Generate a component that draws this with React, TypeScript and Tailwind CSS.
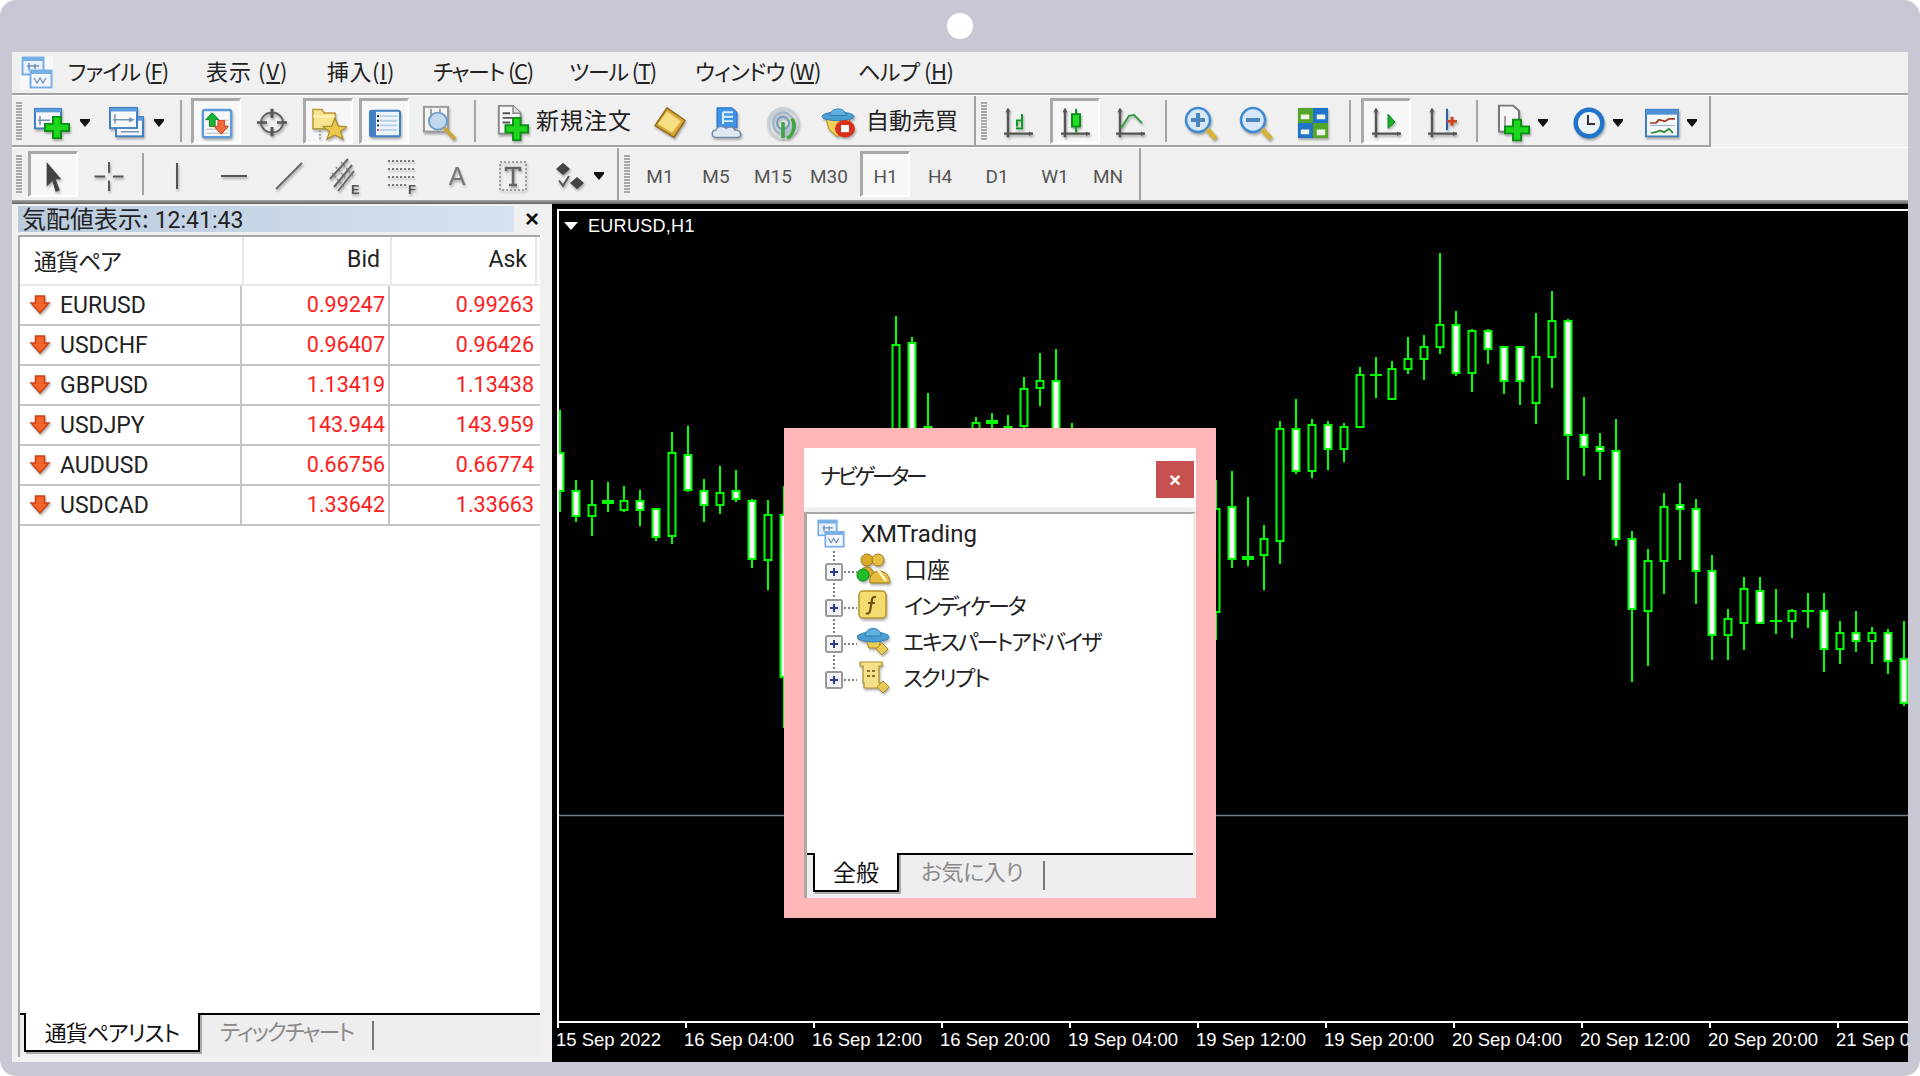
import React from "react";

const GRIP = "w-[6px] h-[38px] bg-[repeating-linear-gradient(to_bottom,#a8a8a8_0px,#a8a8a8_2px,transparent_2px,transparent_3px)]";
const SEP = "w-[2px] h-[42px] bg-[#a4a4a4]";
const JP = "[font-feature-settings:'palt']";
const SHADOW = "drop-shadow-[1px_2px_1px_rgba(0,0,0,0.3)]";

function Btn({ ml, active, flat, children }: { ml: string; active?: boolean; flat?: boolean; children?: React.ReactNode }) {
  return (
    <div className={`${ml} shrink-0 flex items-center justify-center w-[50px] h-[46px] ${active ? "bg-[#f7f7f7] border-t-[3px] border-l-[3px] border-r-2 border-b-2 border-t-[#a9a9a9] border-l-[#a9a9a9] border-r-white border-b-white" : ""}`}>
      <div className={`flex translate-y-[2px] ${flat ? "" : SHADOW}`}>{children}</div>
    </div>
  );
}

function Arrow({ ml }: { ml: string }) {
  return (
    <svg className={`${ml} mt-[4px] shrink-0`} width="10" height="8" viewBox="0 0 10 8">
      <path d="M0 0H10V2L5 8L0 2Z" fill="#111" />
    </svg>
  );
}

const GreenPlus = ({ x, y, s = 1 }: { x: number; y: number; s?: number }) => (
  <g transform={`translate(${x} ${y}) scale(${s})`}>
    <path d="M8 0H16V8H24V16H16V24H8V16H0V8H8Z" fill="#1fd61f" stroke="#0a8f14" strokeWidth="2" />
  </g>
);

const Win = ({ x, y, w, h, fill = "#f2f5fb" }: { x: number; y: number; w: number; h: number; fill?: string }) => (
  <g>
    <rect x={x} y={y} width={w} height={h} fill={fill} stroke="#3f7fc4" strokeWidth="2" />
    <rect x={x} y={y} width={w} height="4" fill="#5b9bdc" />
  </g>
);

const Logo = ({ size = 32 }: { size?: number }) => (
  <svg width={size} height={size + 2} viewBox="0 0 32 34">
    <rect x="1.5" y="1.5" width="21" height="17" fill="#e8f1fb" stroke="#78aee6" strokeWidth="2" />
    <rect x="1" y="1" width="22" height="4" fill="#78aee6" />
    <path d="M6 10H18M8 7V14M14 8V13" stroke="#6d8fb5" strokeWidth="1.5" fill="none" />
    <rect x="9.5" y="14.5" width="21" height="17" fill="#f4f8fd" stroke="#78aee6" strokeWidth="2" />
    <rect x="9" y="14" width="22" height="4" fill="#78aee6" />
    <path d="M13 22L16 27L19 22L22 27L25 22" stroke="#6d8fb5" strokeWidth="1.3" fill="none" />
  </svg>
);

const IconNewChart = () => (
  <svg width="36" height="32" viewBox="0 0 36 36" preserveAspectRatio="none">
    <Win x={1} y={2} w={26} h={22} />
    <path d="M6 10V20M4 15H16" stroke="#7894b5" strokeWidth="1.6" />
    <GreenPlus x={11} y={11} />
  </svg>
);
const IconProfile = () => (
  <svg width="36" height="33" viewBox="0 0 36 36" preserveAspectRatio="none">
    <Win x={7} y={12} w={27} h={21} />
    <Win x={1} y={2} w={27} h={22} fill="#f7f9fd" />
    <path d="M6 9V19M4 15H24M20 13L24 15L20 17M12 28H30" stroke="#7894b5" strokeWidth="1.6" fill="none" />
  </svg>
);
const IconMarket = () => (
  <svg width="32" height="33" viewBox="0 0 34 34" preserveAspectRatio="none">
    <rect x="2" y="3" width="30" height="28" rx="2" fill="#f6f6f6" stroke="#5b9bdc" strokeWidth="2.5" />
    <path d="M20 14H29M20 19H29M6 23H29M6 27H29" stroke="#ccc" strokeWidth="1.5" />
    <path d="M12 6L19 13H15V20H9V13H5Z" fill="#19b534" stroke="#0c8223" strokeWidth="1" />
    <path d="M18 14H25V20H29L21.5 28L14 20H18Z" fill="#f06a3c" stroke="#c9431c" strokeWidth="1" />
  </svg>
);
const IconCross = () => (
  <svg width="32" height="31" viewBox="0 0 32 34" preserveAspectRatio="none">
    <circle cx="16" cy="17" r="11" fill="none" stroke="#666" strokeWidth="2" />
    <path d="M16 2V12M16 22V32M1 17H11M21 17H31" stroke="#555" strokeWidth="3" />
  </svg>
);
const IconFolderStar = () => (
  <svg width="36" height="35" viewBox="0 0 36 40" preserveAspectRatio="none">
    <path d="M2 8V4H11L13 8H24V26H2Z" fill="#f8e58f" stroke="#b89a3c" strokeWidth="1.5" />
    <path d="M2 12H24" stroke="#fff4c0" strokeWidth="2" />
    <path d="M9 28V38" stroke="#888" strokeDasharray="2 2" strokeWidth="1.5" />
    <path d="M24 14L27.5 23L36 23.5L29.5 29L32 38L24 33L16 38L18.5 29L12 23.5L20.5 23Z" fill="#e8c84a" stroke="#a68a28" strokeWidth="1.2" />
  </svg>
);
const IconNavList = () => (
  <svg width="32" height="31" viewBox="0 0 32 34" preserveAspectRatio="none">
    <rect x="1" y="3" width="30" height="28" rx="2" fill="#eef4fb" stroke="#3f7fc4" strokeWidth="2" />
    <rect x="1" y="3" width="6" height="28" fill="#3f7fc4" />
    <path d="M11 9H28M11 14H28M11 19H28M11 24H28" stroke="#b9cfe6" strokeWidth="2" />
    <path d="M9 8V10M9 13V15M9 18V20" stroke="#222" strokeWidth="2" />
    <path d="M9 23V25" stroke="#d33" strokeWidth="2" />
  </svg>
);
const IconTester = () => (
  <svg width="36" height="36" viewBox="0 0 36 38" preserveAspectRatio="none">
    <rect x="2" y="2" width="24" height="26" fill="#f3f3f3" stroke="#999" strokeWidth="2" />
    <path d="M9 4V20M18 4V20" stroke="#888" strokeWidth="1.5" />
    <circle cx="16" cy="17" r="9" fill="#c2d8ee" stroke="#6f9cc9" strokeWidth="2" />
    <path d="M22 24L33 36" stroke="#c9a63a" strokeWidth="4" />
  </svg>
);
const IconNewOrder = () => (
  <svg width="34" height="37" viewBox="0 0 36 40" preserveAspectRatio="none" className="ml-[2px]">
    <path d="M3 2H18L26 10V32H3Z" fill="#f7f7f7" stroke="#888" strokeWidth="2" />
    <path d="M7 10H15M7 15H21M7 20H15" stroke="#555" strokeWidth="2" />
    <path d="M18 2V10H26" fill="#e0e0e0" stroke="#888" strokeWidth="1.5" />
    <GreenPlus x={10} y={15} />
  </svg>
);
const IconBook = () => (
  <svg width="34" height="32" viewBox="0 0 34 36" preserveAspectRatio="none">
    <path d="M14 1L32 15L21 34L2 21Z" fill="#d9a832" stroke="#8f6a1a" strokeWidth="1.5" />
    <path d="M14 5L28 16L19 29L5 19Z" fill="#f6de82" />
  </svg>
);
const IconCloud = () => (
  <svg width="34" height="34" viewBox="0 0 34 38" preserveAspectRatio="none">
    <path d="M7 2H22L27 7V24H7Z" fill="#3d94e8" stroke="#1d6bc0" strokeWidth="1" />
    <path d="M13 7H23M13 12H23M13 17H23M13 7V20" stroke="#dcecfb" strokeWidth="2" fill="none" />
    <path d="M6 35C1 35 1 27 6 27C7 22 14 22 16 25C20 22 25 24 25 27C31 26 33 35 27 35Z" fill="#dfe7f0" stroke="#6f8aa8" strokeWidth="1.5" />
  </svg>
);
const IconSignal = () => (
  <svg width="34" height="34" viewBox="0 0 34 38" preserveAspectRatio="none">
    <ellipse cx="17" cy="19" rx="15" ry="17" fill="none" stroke="#c7d2dc" strokeWidth="2" />
    <ellipse cx="17" cy="19" rx="10" ry="12" fill="none" stroke="#9db7cf" strokeWidth="2" />
    <ellipse cx="17" cy="19" rx="6" ry="7" fill="none" stroke="#6d9dc4" strokeWidth="2" />
    <path d="M17 18V36M26 14C30 22 28 32 21 36" stroke="#3fa53f" strokeWidth="3.5" fill="none" />
  </svg>
);
const Hat = () => (
  <>
    <ellipse cx="16" cy="12" rx="16" ry="5" fill="#4c9dd1" stroke="#2f7eb3" strokeWidth="1" />
    <path d="M8 11C8 1 24 1 24 11Z" fill="#5fb0e0" stroke="#2f7eb3" strokeWidth="1" />
  </>
);
const IconAuto = () => (
  <svg width="36" height="35" viewBox="0 0 36 40" preserveAspectRatio="none">
    <path d="M6 15L30 15L26 30L17 36L9 28Z" fill="#f2cf57" stroke="#a98b22" strokeWidth="1" />
    <g transform="translate(2 1)"><Hat /></g>
    <circle cx="25" cy="27" r="10" fill="#d9301e" />
    <rect x="21" y="23" width="8" height="8" fill="#fff" />
  </svg>
);
const Axes = ({ children }: { children?: React.ReactNode }) => (
  <svg width="32" height="32" viewBox="0 0 32 36" preserveAspectRatio="none">
    <path d="M5 2V34M1 30H30" stroke="#555" strokeWidth="2.4" fill="none" />
    <path d="M5 1L2.5 6H7.5ZM30 30L26 27.5V32.5Z" fill="#555" />
    {children}
  </svg>
);
const IconZoom = ({ plus }: { plus?: boolean }) => (
  <svg width="34" height="34" viewBox="0 0 34 34">
    <circle cx="14" cy="14" r="12" fill="#d6e8f7" stroke="#3f8ad2" strokeWidth="2.5" />
    <path d="M7 14H21" stroke="#4d86bb" strokeWidth="4" />
    {plus && <path d="M14 7V21" stroke="#4d86bb" strokeWidth="4" />}
    <path d="M23 23L32 33" stroke="#d4b23c" strokeWidth="5" />
  </svg>
);
const IconTile = () => (
  <svg width="32" height="32" viewBox="0 0 34 34" preserveAspectRatio="none">
    <rect x="1" y="1" width="16" height="16" fill="#53a62b" />
    <rect x="17" y="1" width="16" height="16" fill="#1f74c9" />
    <rect x="1" y="17" width="16" height="16" fill="#1f74c9" />
    <rect x="17" y="17" width="16" height="16" fill="#53a62b" />
    <path d="M4 8H13V13H4ZM21 8H30V13H21ZM4 24H13V29H4ZM21 24H30V30H21Z" fill="#eef4e8" />
  </svg>
);
const IconDocPlus = () => (
  <svg width="36" height="38" viewBox="0 0 36 44" preserveAspectRatio="none">
    <path d="M2 2H16L22 8V32H2Z" fill="#f5f5f5" stroke="#777" strokeWidth="2" />
    <path d="M8 14V26" stroke="#888" strokeWidth="1.5" />
    <GreenPlus x={8} y={18} />
  </svg>
);
const IconClock = () => (
  <svg width="34" height="34" viewBox="0 0 34 34">
    <circle cx="17" cy="17" r="15.500" fill="#1f74c9" />
    <circle cx="17" cy="17" r="11" fill="#eef3f8" />
    <path d="M16 9V18H23" stroke="#333" strokeWidth="2" fill="none" />
  </svg>
);
const IconIndWin = () => (
  <svg width="34" height="30" viewBox="0 0 34 36" preserveAspectRatio="none">
    <rect x="1" y="2" width="32" height="32" fill="#f6f8fb" stroke="#3f7fc4" strokeWidth="2" />
    <rect x="1" y="2" width="32" height="6" fill="#4f90d4" />
    <path d="M5 21H30" stroke="#9fb8d2" strokeWidth="1.5" />
    <path d="M5 18L11 18L14 14L20 16L24 13L30 13" stroke="#a33a1e" strokeWidth="2" fill="none" />
    <path d="M6 30L11 29L15 27L19 29L24 25L28 30" stroke="#2c8f32" strokeWidth="2" fill="none" />
  </svg>
);
const IconPointer = () => (
  <svg width="18" height="31" viewBox="0 0 22 34" preserveAspectRatio="none">
    <path d="M2 1L20 20H13L18 32L13 34L9 22L2 28Z" fill="#444" />
  </svg>
);
const IconCrossThin = () => (
  <svg width="32" height="31" viewBox="0 0 32 32">
    <path d="M16 1V12M16 20V31M1 16H12M20 16H31" stroke="#555" strokeWidth="2" />
  </svg>
);
const IconEChan = () => (
  <svg width="34" height="44" viewBox="0 0 34 44" className="-mb-[6px]">
    <path d="M2 22L20 2M6 30L24 8M10 34L26 14" stroke="#666" strokeWidth="2" />
    <path d="M4 16L16 30M8 10L20 24M13 5L25 19" stroke="#888" strokeWidth="1.5" strokeDasharray="2 2" />
    <text x="23" y="37" fontSize="13" fontFamily="Liberation Sans" fontWeight="700" fill="#555">E</text>
  </svg>
);
const IconFGrid = () => (
  <svg width="34" height="44" viewBox="0 0 34 44" className="-mb-[6px]">
    <path d="M3 4H31M3 12H31M3 20H31M3 28H22" stroke="#777" strokeWidth="2" strokeDasharray="2 2" />
    <text x="23" y="37" fontSize="13" fontFamily="Liberation Sans" fontWeight="700" fill="#555">F</text>
  </svg>
);
const IconTextBox = () => (
  <svg width="30" height="34" viewBox="0 0 30 34">
    <rect x="2" y="3" width="26" height="28" fill="none" stroke="#888" strokeWidth="1.5" strokeDasharray="2 2" />
    <path d="M8 12V9H22V12M15 9V26M11 26H19" stroke="#666" strokeWidth="2.5" fill="none" />
  </svg>
);
const IconShapes = () => (
  <svg width="32" height="30" viewBox="0 0 32 34" preserveAspectRatio="none">
    <path d="M9 2L16 9L9 16L2 9Z" fill="#444" />
    <path d="M23 18L30 25L23 32L16 25Z" fill="#444" />
    <path d="M5 22L9 28L15 17" stroke="#555" strokeWidth="2" fill="none" />
  </svg>
);
const DownArrow = () => (
  <svg width="22" height="24" viewBox="0 0 22 24" className={`shrink-0 ${SHADOW}`}>
    <path d="M6.500 3H15.500V10H20L11 20L2 10H6.500Z" fill="#f2642b" stroke="#c9401a" strokeWidth="1.5" />
  </svg>
);
const TreeAcc = () => (
  <svg width="36" height="34" viewBox="0 0 36 34">
    <circle cx="11" cy="8" r="6" fill="#d9ab2c" stroke="#9c7a18" />
    <circle cx="22" cy="8" r="6" fill="#e6bd3f" stroke="#9c7a18" />
    <path d="M4 24C4 12 18 12 18 24Z" fill="#d9ab2c" stroke="#9c7a18" />
    <path d="M14 31C12 15 34 15 34 31Z" fill="#e6bd3f" stroke="#9c7a18" />
    <path d="M22 18L30 29" stroke="#fff6c9" strokeWidth="2.5" />
    <circle cx="7" cy="23" r="6" fill="#1fbd2a" stroke="#118a1b" />
  </svg>
);
const TreeF = () => (
  <svg width="34" height="32" viewBox="0 0 34 32">
    <rect x="2" y="2" width="27" height="27" rx="4" fill="#f5dc71" stroke="#b3952e" strokeWidth="1.5" />
    <path d="M19 8C15 7 15 10 14.500 14L13 22C12.500 25 10 25 9 24M11 14H18" stroke="#6e5412" strokeWidth="2.2" fill="none" />
  </svg>
);
const TreeHat = () => (
  <svg width="34" height="32" viewBox="0 0 34 32">
    <path d="M8 12H24L22 23H12Z" fill="#eccc55" stroke="#a88a25" />
    <Hat />
    <path d="M25 18L31 24L25 30L19 24Z" fill="#ecc955" stroke="#a88a25" />
  </svg>
);
const TreeScroll = () => (
  <svg width="34" height="32" viewBox="0 0 34 32">
    <path d="M3 1H25V5H22V22H26V27H7V22H6V5H3Z" fill="#f4e08a" stroke="#ab8e2c" strokeWidth="1.2" />
    <path d="M10 10H18M10 15H18" stroke="#8a7326" strokeWidth="2" strokeDasharray="3 2" />
    <path d="M26 20L32 26L26 32L20 26Z" fill="#ecc955" stroke="#a88a25" />
  </svg>
);

const rows = [
  ["EURUSD", "0.99247", "0.99263"],
  ["USDCHF", "0.96407", "0.96426"],
  ["GBPUSD", "1.13419", "1.13438"],
  ["USDJPY", "143.944", "143.959"],
  ["AUDUSD", "0.66756", "0.66774"],
  ["USDCAD", "1.33642", "1.33663"],
];

const dates = ["15 Sep 2022", "16 Sep 04:00", "16 Sep 12:00", "16 Sep 20:00", "19 Sep 04:00", "19 Sep 12:00", "19 Sep 20:00", "20 Sep 04:00", "20 Sep 12:00", "20 Sep 20:00", "21 Sep 04:00"];

// x index (from 559, 16px step), high, body top, body bottom, low, white body
type C = [number, number, number, number, number, number];
const candles: C[] = [
  [0, 410, 453, 491, 512, 1], [1, 480, 491, 516, 522, 1], [2, 480, 505, 516, 536, 0], [3, 482, 502, 502, 512, 1],
  [4, 486, 501, 510, 512, 0], [5, 490, 501, 510, 526, 1], [6, 509, 509, 537, 541, 1], [7, 432, 453, 536, 544, 0],
  [8, 426, 455, 490, 492, 1], [9, 479, 491, 505, 522, 1], [10, 466, 493, 505, 514, 0], [11, 470, 491, 499, 502, 1],
  [12, 499, 501, 559, 568, 1], [13, 500, 515, 560, 590, 0], [14, 486, 515, 677, 728, 1],
  [21, 316, 345, 500, 520, 0], [22, 337, 343, 500, 520, 1], [23, 393, 427, 500, 520, 0],
  [26, 417, 423, 500, 520, 0], [27, 413, 422, 422, 500, 1], [28, 415, 427, 500, 520, 0],
  [29, 377, 389, 426, 428, 0], [30, 353, 381, 388, 406, 0], [31, 349, 381, 500, 520, 1], [32, 423, 450, 500, 520, 0],
  [41, 480, 509, 612, 640, 0], [42, 471, 507, 559, 568, 1], [43, 497, 558, 558, 566, 1], [44, 525, 539, 555, 590, 0],
  [45, 421, 429, 541, 564, 0], [46, 399, 429, 471, 474, 1], [47, 419, 425, 471, 478, 0], [48, 421, 425, 449, 470, 1],
  [49, 423, 427, 449, 462, 0], [50, 367, 375, 427, 427, 0], [51, 357, 375, 375, 398, 0], [52, 361, 369, 399, 399, 0],
  [53, 337, 359, 369, 374, 0], [54, 335, 347, 359, 380, 0], [55, 253, 325, 347, 354, 0], [56, 311, 325, 373, 376, 1],
  [57, 329, 331, 373, 392, 0], [58, 329, 331, 349, 364, 1], [59, 347, 347, 381, 394, 1], [60, 347, 347, 381, 405, 1],
  [61, 313, 357, 403, 424, 0], [62, 291, 321, 357, 388, 0], [63, 319, 321, 435, 480, 1], [64, 397, 435, 447, 476, 1],
  [65, 433, 447, 451, 480, 1], [66, 419, 451, 539, 546, 1], [67, 531, 539, 609, 682, 1], [68, 549, 561, 611, 666, 0],
  [69, 493, 507, 561, 594, 0], [70, 483, 505, 509, 560, 1], [71, 499, 509, 571, 604, 1], [72, 555, 571, 635, 660, 1],
  [73, 609, 619, 635, 660, 0], [74, 577, 589, 623, 650, 0], [75, 577, 591, 623, 623, 1], [76, 589, 621, 621, 634, 0],
  [77, 609, 611, 621, 638, 0], [78, 593, 611, 611, 628, 0], [79, 593, 611, 649, 672, 1], [80, 621, 633, 649, 664, 0],
  [81, 611, 633, 641, 652, 1], [82, 627, 633, 641, 664, 0], [83, 629, 633, 661, 674, 1], [84, 621, 659, 703, 706, 1],
];

function Chart() {
  return (
    <svg width="1350" height="811" viewBox="558 211 1350 811" className="block">
      <path d="M558 815.500H1908" stroke="#708090" strokeWidth="1.500" />
      {candles.map(([i, hi, top, bot, lo, white]) => {
        const x = 559 + 16 * i;
        return (
          <g key={i}>
            <path d={`M${x} ${hi}V${lo}`} stroke="#00ff00" strokeWidth="2" />
            {top === bot ? (
              <path d={`M${x - 6} ${top}H${x + 6}`} stroke="#00ff00" strokeWidth={white ? 4 : 2} />
            ) : (
              <rect x={x - 3.5} y={top} width="7" height={bot - top} fill={white ? "#fff" : "#000"} stroke="#00ff00" strokeWidth="2" />
            )}
          </g>
        );
      })}
    </svg>
  );
}

function Tab({ label, inactive, active, ml, w, activeCls }: { label: string; inactive: string; active: string; ml: string; w: string; activeCls: string }) {
  return (
    <div className="flex items-start h-full">
      <div className={`${ml} ${w} h-[39px] -mt-[2px] shrink-0 bg-white border-l-2 border-r-2 border-b-2 border-black shadow-[2px_2px_0_#aaa] flex items-center justify-center text-[#111] ${activeCls} ${JP}`}>{active}</div>
      <div className={`${label} text-[22px] text-[#8a8a8a] whitespace-nowrap leading-[30px] shrink-0 ${JP}`}>{inactive}</div>
      <div className="w-[2px] h-[29px] mt-[6px] bg-[#777] shrink-0" />
    </div>
  );
}

function Gutter({ last }: { last?: boolean }) {
  return (
    <svg width="48" height="36" viewBox="0 0 48 36" className="shrink-0 ml-[2px]">
      <path d={`M25 0V${last ? 14 : 36}`} stroke="#555" strokeWidth="1.500" strokeDasharray="2 2" />
      <path d="M35 21H48" stroke="#555" strokeWidth="1.500" strokeDasharray="2 2" />
      <rect x="17" y="13" width="16" height="16" rx="1.500" fill="#f4f4f8" stroke="#9a9a9a" strokeWidth="2" />
      <path d="M21 21H29M25 17V25" stroke="#2c3f8f" strokeWidth="2" />
    </svg>
  );
}

const treeItems = [
  { icon: <TreeAcc />, text: "口座", cls: "ml-[13px] text-[23px]" },
  { icon: <TreeF />, text: "インディケータ", cls: "ml-[13px] text-[22px] tracking-[-2.300px]" },
  { icon: <TreeHat />, text: "エキスパートアドバイザ", cls: "ml-[12px] text-[22px] tracking-[-2px]" },
  { icon: <TreeScroll />, text: "スクリプト", cls: "ml-[12px] text-[22px] tracking-[-1.800px]" },
];

export default function App() {
  return (
    <div className="relative w-[1920px] h-[1076px] bg-white overflow-hidden font-['Noto_Sans_CJK_JP',sans-serif]">
      <div className="w-full h-full rounded-[16px] bg-[#c8c8d4] flex flex-col px-[12px] pb-[14px]">
        <div className="h-[52px] shrink-0 flex items-center justify-center">
          <div className="w-[26px] h-[26px] rounded-full bg-white" />
        </div>
        <div className="flex-1 min-h-0 flex flex-col bg-[#f0f0f0]">
          {/* Menu */}
          <div className="h-[43px] shrink-0 flex items-center border-b-2 border-[#a2a2a2] text-[22px] text-[#222] leading-none">
            <div className="ml-[8px] w-[33px] h-[34px] flex items-center justify-center bg-[#f8f8f8] shrink-0"><Logo /></div>
            {[
              ["ml-[15px] w-[100px] tracking-[-1px]", "ファイル (", "F", ")"],
              ["ml-[38px] w-[83px] tracking-[1px]", "表示 (", "V", ")"],
              ["ml-[38px] w-[67px] tracking-[0.500px]", "挿入(", "I", ")"],
              ["ml-[39px] w-[100px] tracking-[-1.300px]", "チャート (", "C", ")"],
              ["ml-[36px] w-[87px] tracking-[-1.200px]", "ツール (", "T", ")"],
              ["ml-[39px] w-[125px] tracking-[-0.800px]", "ウィンドウ (", "W", ")"],
              ["ml-[38px] w-[96px] tracking-[-0.500px]", "ヘルプ (", "H", ")"],
            ].map(([c, a, u, z]) => (
              <span key={u} className={`${c} shrink-0 whitespace-nowrap pb-[5px] ${JP}`}>{a}<u>{u}</u>{z}</span>
            ))}
          </div>
          {/* Toolbar 1 */}
          <div className="shrink-0 border-t border-white">
            <div className="w-[1699px] h-[51px] flex items-center border-b-2 border-r-2 border-[#a2a2a2]">
              <div className={`ml-[4px] shrink-0 ${GRIP}`} />
              <div className={`ml-[12px] mt-[4px] shrink-0 ${SHADOW}`}><IconNewChart /></div>
              <Arrow ml="ml-[10px]" />
              <div className={`ml-[19px] mt-[4px] shrink-0 ${SHADOW}`}><IconProfile /></div>
              <Arrow ml="ml-[9px]" />
              <div className={`ml-[16px] shrink-0 ${SEP}`} />
              <Btn ml="ml-[9px]" active><IconMarket /></Btn>
              <Btn ml="ml-[6px]"><IconCross /></Btn>
              <Btn ml="ml-[6px]" active><IconFolderStar /></Btn>
              <Btn ml="ml-[6px]" active><IconNavList /></Btn>
              <Btn ml="ml-[6px]"><IconTester /></Btn>
              <div className={`ml-[9px] shrink-0 ${SEP}`} />
              <div className={`ml-[18px] mt-[4px] shrink-0 flex ${SHADOW}`}><IconNewOrder /></div>
              <span className="ml-[6px] w-[96px] shrink-0 text-[23px] text-[#222] tracking-[1px] whitespace-nowrap leading-none pb-[2px]">新規注文</span>
              <Btn ml="ml-[13px]"><IconBook /></Btn>
              <Btn ml="ml-[7px]"><IconCloud /></Btn>
              <Btn ml="ml-[6px]"><IconSignal /></Btn>
              <div className={`ml-[12px] mt-[4px] shrink-0 flex ${SHADOW}`}><IconAuto /></div>
              <span className="ml-[10px] w-[92px] shrink-0 text-[23px] text-[#222] whitespace-nowrap leading-none pb-[2px]">自動売買</span>
              <div className="ml-[16px] shrink-0 w-[2px] h-full bg-[#a2a2a2]" />
              <div className={`ml-[5px] shrink-0 ${GRIP}`} />
              <Btn ml="ml-[7px]"><Axes><path d="M14 22V15H19M19 8V24H13" stroke="#0c9a24" strokeWidth="2" fill="none" /></Axes></Btn>
              <Btn ml="ml-[6px]" active><Axes><path d="M16 2V28" stroke="#0c9a24" strokeWidth="2" /><rect x="12" y="8" width="8" height="14" fill="#1fe01f" stroke="#0c8a1c" strokeWidth="2" /></Axes></Btn>
              <Btn ml="ml-[6px]"><Axes><path d="M6 24L14 10L19 9L27 18" stroke="#2f9a3a" strokeWidth="2" fill="none" /></Axes></Btn>
              <div className={`ml-[9px] shrink-0 ${SEP}`} />
              <Btn ml="ml-[9px]"><IconZoom plus /></Btn>
              <Btn ml="ml-[5px]"><IconZoom /></Btn>
              <Btn ml="ml-[7px]"><IconTile /></Btn>
              <div className={`ml-[11px] shrink-0 ${SEP}`} />
              <Btn ml="ml-[10px]" active><Axes><path d="M17 8L24 17L17 24Z" fill="#1fae2a" stroke="#0c8a1c" strokeWidth="1" /></Axes></Btn>
              <Btn ml="ml-[7px]"><Axes><path d="M20 2V26" stroke="#2d5fa8" strokeWidth="2" /><path d="M20 16H30M25 11V21" stroke="#d0431c" strokeWidth="3" /></Axes></Btn>
              <div className={`ml-[8px] shrink-0 ${SEP}`} />
              <div className={`ml-[19px] mt-[4px] shrink-0 flex ${SHADOW}`}><IconDocPlus /></div>
              <Arrow ml="ml-[5px]" />
              <div className={`ml-[24px] mt-[4px] shrink-0 flex ${SHADOW}`}><IconClock /></div>
              <Arrow ml="ml-[7px]" />
              <div className={`ml-[22px] mt-[4px] shrink-0 flex ${SHADOW}`}><IconIndWin /></div>
              <Arrow ml="ml-[8px]" />
            </div>
          </div>
          {/* Toolbar 2 */}
          <div className="shrink-0 border-t border-white">
            <div className="h-[52px] flex items-center">
              <div className={`ml-[4px] shrink-0 ${GRIP}`} />
              <Btn ml="ml-[6px]" active><IconPointer /></Btn>
              <Btn ml="ml-[6px]"><IconCrossThin /></Btn>
              <div className={`ml-[8px] shrink-0 ${SEP}`} />
              <Btn ml="ml-[8px]"><div className="w-[2px] h-[26px] bg-[#555]" /></Btn>
              <Btn ml="ml-[7px]"><div className="w-[26px] h-[2px] bg-[#555]" /></Btn>
              <Btn ml="ml-[5px]"><svg width="28" height="28" viewBox="0 0 28 28"><path d="M1 27L27 1" stroke="#666" strokeWidth="2" /></svg></Btn>
              <Btn ml="ml-[6px]"><IconEChan /></Btn>
              <Btn ml="ml-[7px]"><IconFGrid /></Btn>
              <Btn ml="ml-[5px]"><span className="text-[25px] font-['Liberation_Sans',sans-serif] text-[#777] font-normal leading-none">A</span></Btn>
              <Btn ml="ml-[6px]"><IconTextBox /></Btn>
              <div className={`ml-[16px] mt-[4px] shrink-0 flex ${SHADOW}`}><IconShapes /></div>
              <Arrow ml="ml-[8px]" />
              <div className="ml-[13px] shrink-0 w-[2px] h-full bg-[#a2a2a2]" />
              <div className={`ml-[5px] shrink-0 ${GRIP}`} />
              {[
                ["ml-[5px]", "M1", false],
                ["ml-[6px]", "M5", false],
                ["ml-[7px]", "M15", false],
                ["ml-[6px]", "M30", false],
                ["ml-[6px]", "H1", true],
                ["ml-[5px]", "H4", false],
                ["ml-[7px]", "D1", false],
                ["ml-[8px]", "W1", false],
                ["ml-[3px]", "MN", false],
              ].map(([ml, t, a]) => (
                <Btn key={t as string} ml={ml as string} active={a as boolean} flat>
                  <span className="font-['Roboto',sans-serif] text-[19px] text-[#555] leading-none">{t as string}</span>
                </Btn>
              ))}
              <div className="ml-[6px] shrink-0 w-[2px] h-full bg-[#a2a2a2]" />
            </div>
          </div>
          <div className="h-[4px] shrink-0 bg-[linear-gradient(#a8a8a8,#606060)]" />
          {/* Main */}
          <div className="flex-1 min-h-0 flex">
            {/* Market watch */}
            <div className="w-[540px] shrink-0 flex flex-col pl-[6px] pr-[4px]">
              <div className="h-[26px] mt-[2px] shrink-0 flex items-center">
                <div className="w-[496px] h-full bg-[linear-gradient(to_right,#b9cbdd,#d6e2ef)] flex items-center pl-[4px]">
                  <span className="text-[24px] text-[#222] leading-[24px] whitespace-nowrap flex items-baseline">気配値表示: <span className="font-['Roboto',sans-serif] text-[23px] leading-[24px] ml-[6px]">12:41:43</span></span>
                </div>
                <span className="ml-[11px] text-[24px] font-bold text-[#111] font-['Liberation_Sans',sans-serif] leading-none">×</span>
              </div>
              <div className="flex-1 min-h-0 flex flex-col bg-white border-l-2 border-t-2 border-[#a8a8a8] mt-[3px] mr-[8px]">
                <div className="h-[49px] shrink-0 grid grid-cols-[224px_148px_145px] border-b-2 border-[#e8e8e8] text-[#222]">
                  <div className={`flex items-center pl-[14px] text-[23px] tracking-[-1px] border-r-2 border-[#e8e8e8] ${JP}`}>通貨ペア</div>
                  <div className="flex items-center justify-end pr-[10px] font-['Roboto',sans-serif] text-[23px] border-r-2 border-[#e8e8e8]">Bid</div>
                  <div className="flex items-center justify-end pr-[8px] font-['Roboto',sans-serif] text-[23px] border-r-2 border-[#e8e8e8]">Ask</div>
                </div>
                {rows.map(([p, b, a]) => (
                  <div key={p} className="h-[40px] shrink-0 grid grid-cols-[222px_148px_149px] border-b-2 border-[#c4c4c4] items-stretch">
                    <div className="flex items-center pl-[9px] border-r-2 border-[#c4c4c4]">
                      <DownArrow />
                      <span className="ml-[9px] font-['Roboto',sans-serif] text-[23px] text-[#222] leading-none">{p}</span>
                    </div>
                    <div className="flex items-center justify-end pr-[3px] border-r-2 border-[#c4c4c4] font-['Roboto',sans-serif] text-[21.500px] text-[#ff2020] leading-none">{b}</div>
                    <div className="flex items-center justify-end pr-[5px] font-['Roboto',sans-serif] text-[21.500px] text-[#ff2020] leading-none">{a}</div>
                  </div>
                ))}
                <div className="flex-1 min-h-0" />
                <div className="h-[44px] shrink-0 border-t-2 border-black bg-[#eeeeee]">
                  <Tab ml="ml-[4px]" w="w-[176px]" activeCls="text-[22px] tracking-[-1px]" active="通貨ペアリスト" inactive="ティックチャート" label="ml-[20px] w-[152px] tracking-[-2px]" />
                </div>
              </div>
              <div className="h-[5px] shrink-0" />
            </div>
            {/* Chart */}
            <div className="flex-1 min-w-0 bg-black overflow-hidden pt-[5px] pl-[5px] flex flex-col">
              <div className="relative w-[1352px] h-[814px] shrink-0 border-l-2 border-t-2 border-b-2 border-white">
                <Chart />
                <div className="absolute left-[5px] top-[6px] flex items-center">
                  <svg width="14" height="8" viewBox="0 0 14 8"><path d="M0 0H14L7 8Z" fill="#fff" /></svg>
                  <span className="ml-[10px] font-['Liberation_Sans',sans-serif] text-[18px] text-white leading-none whitespace-nowrap tracking-[0.3px]">EURUSD,H1</span>
                </div>
              </div>
              <div className="flex-1 min-h-0 flex">
                {dates.map((d) => (
                  <div key={d} className="w-[128px] shrink-0">
                    <div className="w-[2px] h-[5px] bg-white" />
                    <div className="-ml-[1px] font-['Liberation_Sans',sans-serif] text-[18.500px] text-white leading-[24px] whitespace-nowrap">{d}</div>
                  </div>
                ))}
              </div>
            </div>
          </div>
        </div>
      </div>

      {/* Navigator dialog */}
      <div className="absolute left-[784px] top-[428px] w-[432px] h-[490px] bg-[#ffb6b9] p-[20px]">
        <div className="w-full h-full bg-white flex flex-col">
          <div className="h-[59px] shrink-0 flex items-start justify-between">
            <span className={`ml-[16px] mt-[15px] text-[22px] tracking-[-3.500px] text-[#222] leading-none ${JP}`}>ナビゲーター</span>
            <div className="mt-[13px] mr-[2px] w-[38px] h-[37px] bg-[#c75050] flex items-center justify-center text-white font-bold text-[20px] font-['Liberation_Sans',sans-serif] leading-none">×</div>
          </div>
          <div className="h-[5px] shrink-0 bg-[#f0f0f0]" />
          <div className="flex-1 min-h-0 flex flex-col border-t-2 border-l-[3px] border-r-[3px] border-t-[#a8a8a8] border-l-[#a8a8a8] border-r-[#eeeeee] bg-white">
            <div className="h-[37px] shrink-0 flex items-center pl-[10px] pt-[2px]">
              <Logo size={28} />
              <span className="ml-[16px] font-['Roboto',sans-serif] text-[24px] text-[#222] leading-none">XMTrading</span>
            </div>
            {treeItems.map((t, i) => (
              <div key={t.text} className="h-[36px] shrink-0 flex items-center">
                <Gutter last={i === 3} />
                <div className="shrink-0 w-[34px] flex justify-center"><div className={SHADOW}>{t.icon}</div></div>
                <span className={`${t.cls} text-[#222] whitespace-nowrap leading-none pb-[2px] ${JP}`}>{t.text}</span>
              </div>
            ))}
            <div className="flex-1 min-h-0" />
            <div className="h-[45px] shrink-0 border-t-2 border-black bg-[#eeeeee]">
              <Tab ml="ml-[6px]" w="w-[86px]" activeCls="text-[23px]" active="全般" inactive="お気に入り" label="ml-[22px] w-[122px] tracking-[-0.500px]" />
            </div>
          </div>
        </div>
      </div>
    </div>
  );
}
